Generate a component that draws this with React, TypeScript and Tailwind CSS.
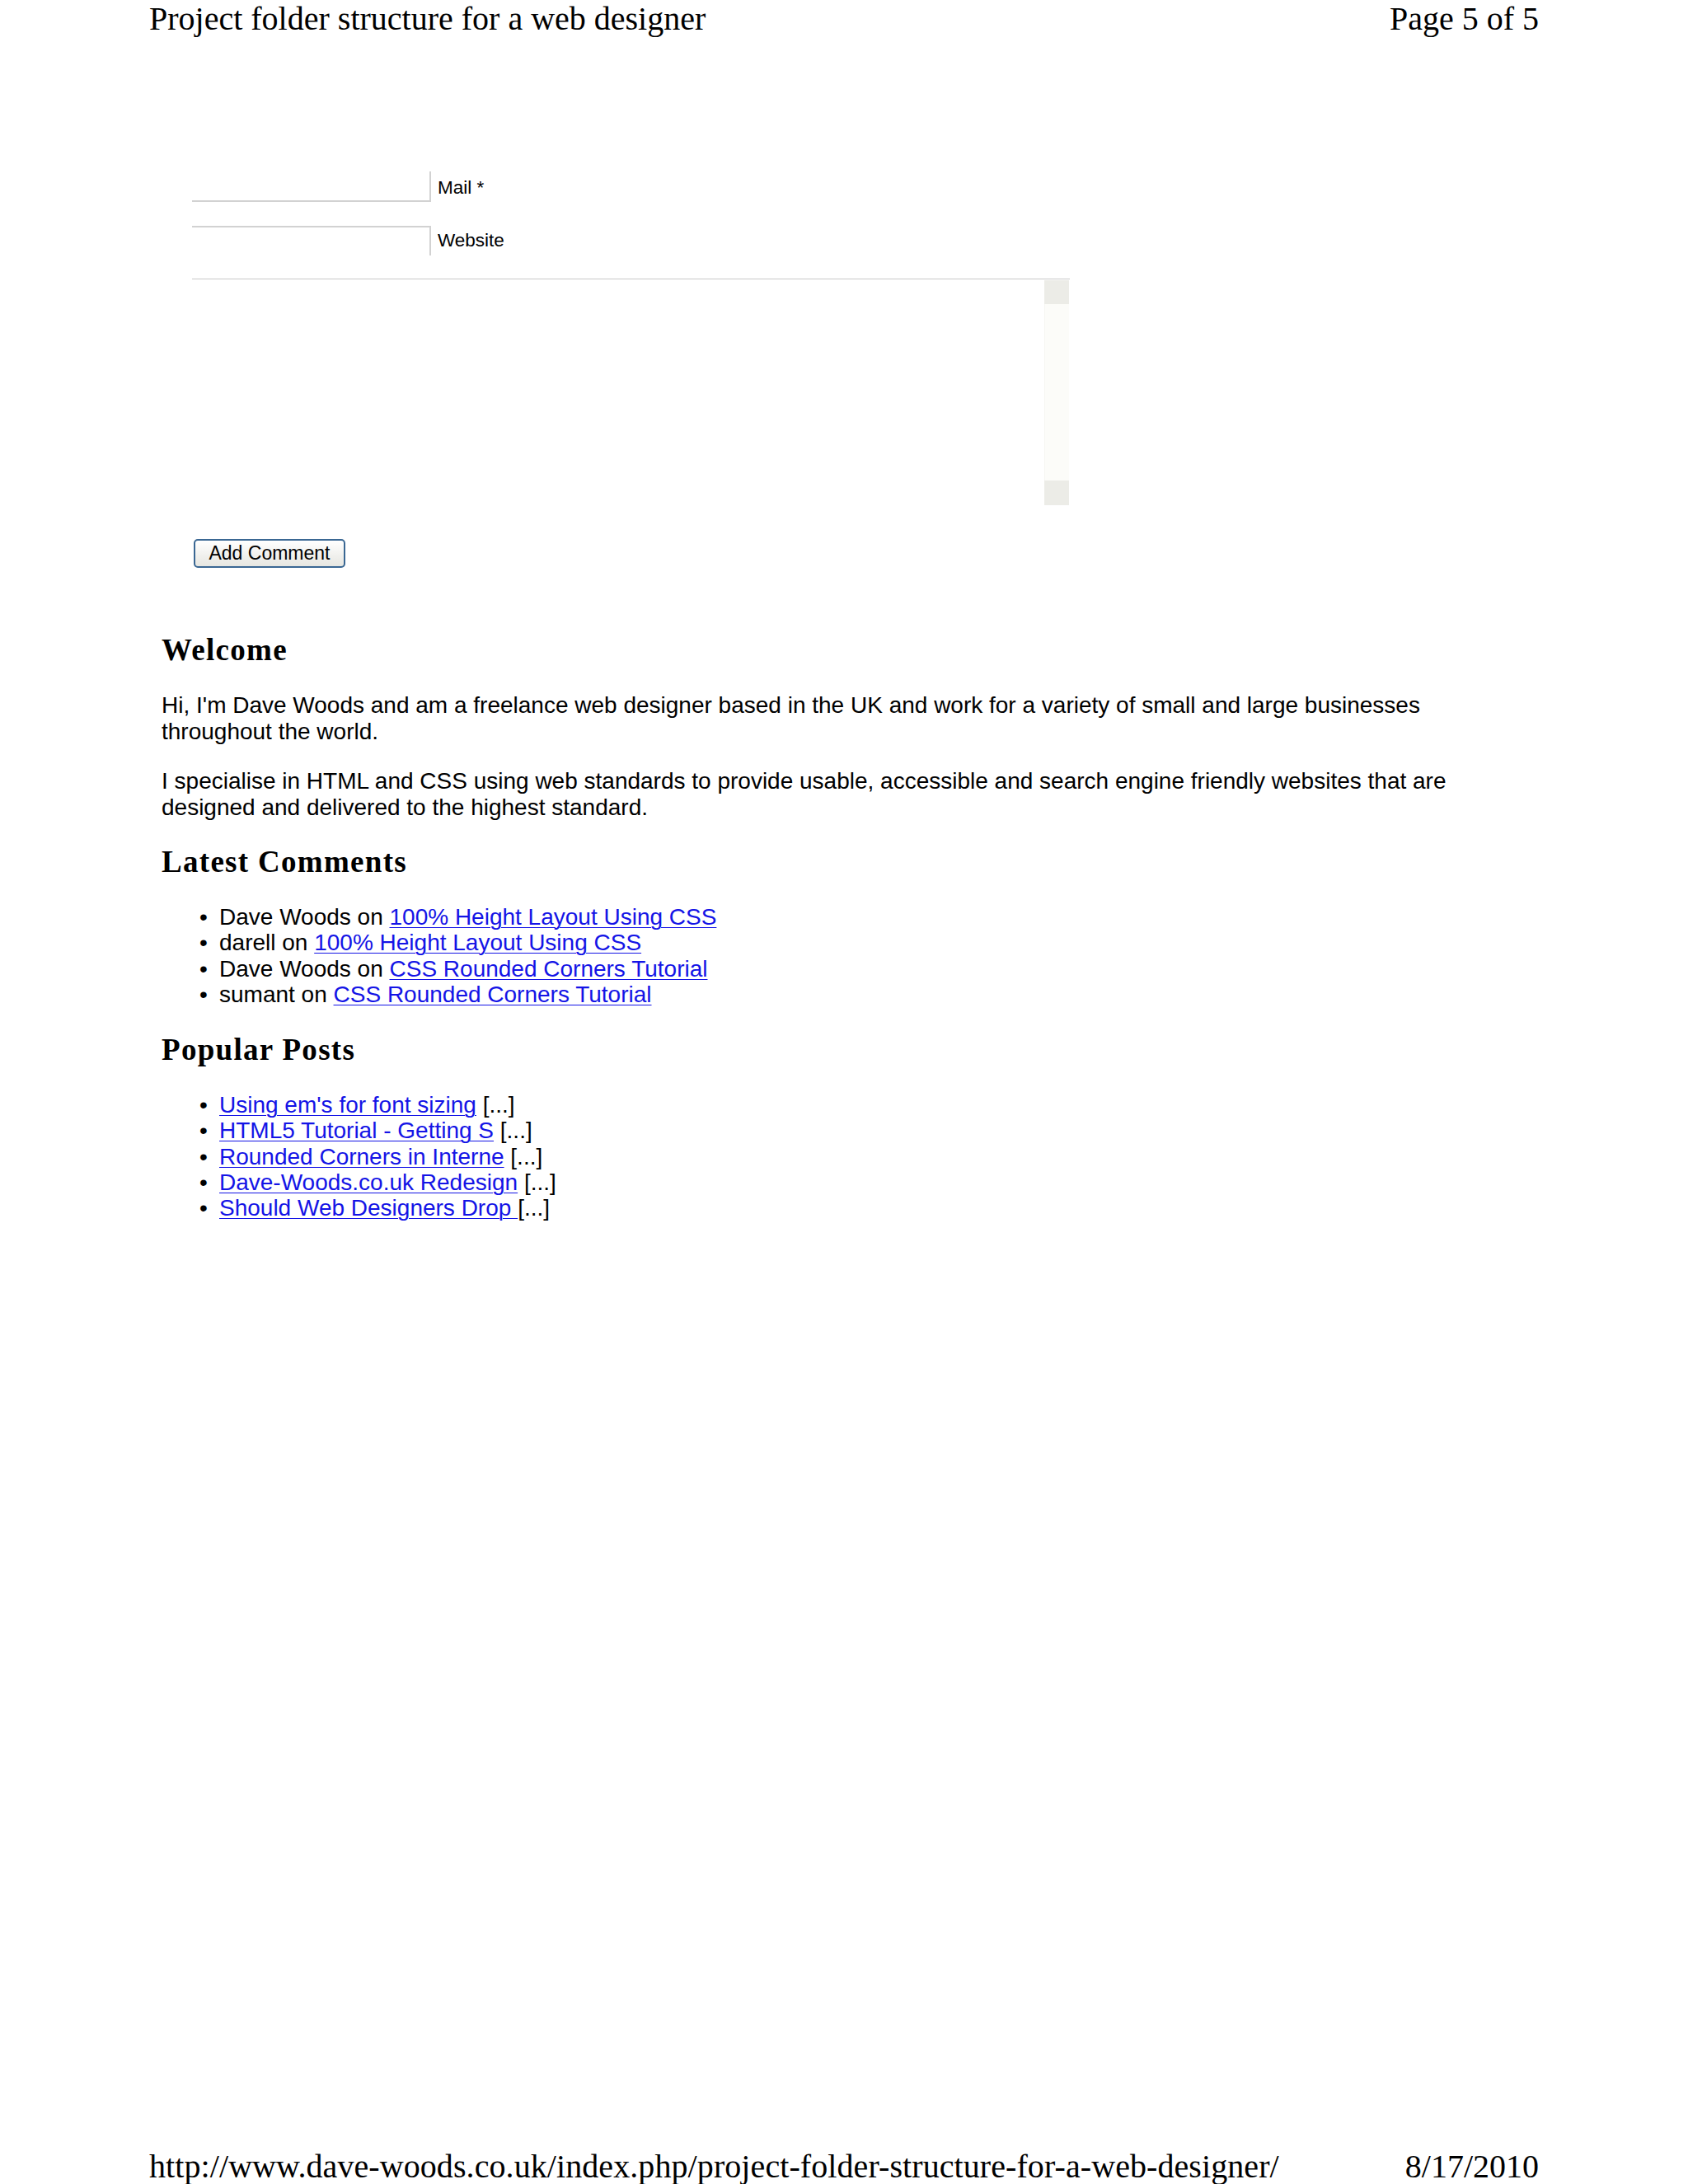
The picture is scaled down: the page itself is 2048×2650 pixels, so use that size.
const SERIF = { fontFamily: '"Liberation Serif", "Times New Roman", serif' };

const LATEST = [
  { who: 'Dave Woods', post: '100% Height Layout Using CSS' },
  { who: 'darell', post: '100% Height Layout Using CSS' },
  { who: 'Dave Woods', post: 'CSS Rounded Corners Tutorial' },
  { who: 'sumant', post: 'CSS Rounded Corners Tutorial' },
];

const POPULAR = [
  "Using em's for font sizing",
  'HTML5 Tutorial - Getting S',
  'Rounded Corners in Interne',
  'Dave-Woods.co.uk Redesign',
  'Should Web Designers Drop ',
];

function Heading({ children }: { children: React.ReactNode }) {
  return (
    <h2
      className="text-[37px] font-bold leading-[40px] tracking-[1.3px] text-black"
      style={SERIF}
    >
      {children}
    </h2>
  );
}

function Bullet({ children }: { children: React.ReactNode }) {
  return (
    <li className="flex">
      <span className="w-[24px] shrink-0">•</span>
      <span>{children}</span>
    </li>
  );
}

function Link({ children }: { children: React.ReactNode }) {
  return <a className="text-[#1414e6] underline decoration-1 underline-offset-[3px]">{children}</a>;
}

// Comment form: mail/website fields, message box and submit button.
function CommentForm() {
  return (
    <form className="ml-[233px] mt-[162px] text-[22.5px] text-black">
      <div className="flex h-[37px] items-start">
        <input className="h-[37px] w-[290px] border-b-2 border-r-2 border-[#d2d2d2] bg-white outline-none" />
        <label className="ml-[8px] mt-[7px] leading-[26px]">Mail *</label>
      </div>
      <div className="mt-[29px] flex h-[36px] items-start">
        <input className="h-[36px] w-[290px] border-r-2 border-t-2 border-[#d2d2d2] bg-white outline-none" />
        <label className="ml-[8px] mt-[5px] leading-[26px]">Website</label>
      </div>
      <div className="mt-[28px] flex h-[275px] w-[1065px] border-t border-[#c8c8c8]">
        <textarea className="h-full flex-1 resize-none bg-white outline-none" />
        <div className="mr-[1px] mt-[1px] flex w-[30px] flex-col bg-[#fcfcf9]">
          <div className="h-[29px] bg-[#ecece7]" />
          <div className="flex-1 border-l border-[#f6f6f2]" />
          <div className="h-[30px] bg-[#ecece7]" />
        </div>
      </div>
      <button
        type="button"
        className="ml-[2px] mt-[41px] h-[35px] w-[184px] rounded-[5px] border-2 border-[#3a6793] bg-gradient-to-b from-white to-[#e6e6e1] text-[23px] leading-none text-black"
      >
        Add Comment
      </button>
    </form>
  );
}

export default function App() {
  return (
    <div
      className="flex h-[2650px] flex-col overflow-hidden bg-white text-black"
      style={{ fontFamily: '"Liberation Sans", Arial, sans-serif' }}
    >
      <header
        className="mx-[181px] flex justify-between text-[40px] leading-[46px]"
        style={SERIF}
      >
        <span>Project folder structure for a web designer</span>
        <span>Page 5 of 5</span>
      </header>

      <CommentForm />

      <main className="ml-[196px] mt-[80px] w-[1620px] text-[28px] leading-[31.5px]">
        <Heading>Welcome</Heading>
        <p className="mt-[31px]">
          Hi, I'm Dave Woods and am a freelance web designer based in the UK and work for a variety
          of small and large businesses throughout the world.
        </p>
        <p className="mt-[29px]">
          I specialise in HTML and CSS using web standards to provide usable, accessible and search
          engine friendly websites that are designed and delivered to the highest standard.
        </p>

        <div className="mt-[31px]">
          <Heading>Latest Comments</Heading>
        </div>
        <ul className="mt-[31px] pl-[46px] leading-[31.3px]">
          {LATEST.map((c, i) => (
            <Bullet key={i}>
              {c.who} on <Link>{c.post}</Link>
            </Bullet>
          ))}
        </ul>

        <div className="mt-[32px]">
          <Heading>Popular Posts</Heading>
        </div>
        <ul className="mt-[31px] pl-[46px] leading-[31.2px]">
          {POPULAR.map((p) => (
            <Bullet key={p}>
              <Link>{p}</Link> [...]
            </Bullet>
          ))}
        </ul>
      </main>

      <footer
        className="mx-[181px] mb-[1px] mt-auto flex justify-between text-[40px] leading-[40px]"
        style={SERIF}
      >
        <span className="tracking-[0.08px]">
          http://www.dave-woods.co.uk/index.php/project-folder-structure-for-a-web-designer/
        </span>
        <span>8/17/2010</span>
      </footer>
    </div>
  );
}
